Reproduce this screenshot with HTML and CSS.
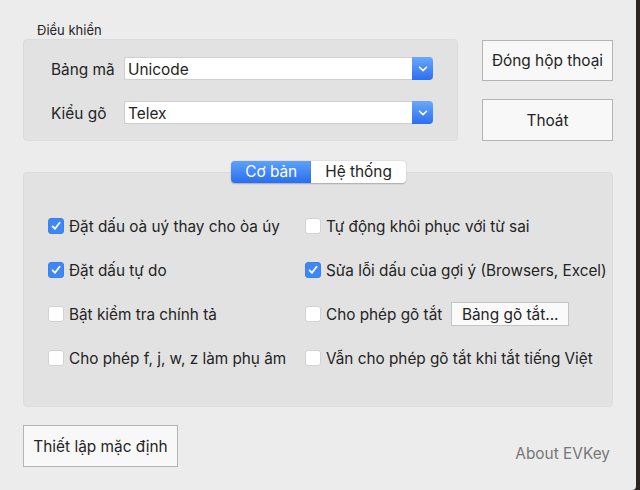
FILE: index.html
```html
<!DOCTYPE html>
<html>
<head>
<meta charset="utf-8">
<link rel="stylesheet" href="styles.css">
</head>
<body>
<div class="window">
  <div class="top">
    <div class="group-wrap">
      <div class="group-label">Điều khiển</div>
      <div class="group">
        <div class="field-row">
          <span class="field-label">Bảng mã</span>
          <div class="select"><span class="select-text">Unicode</span><span class="select-cap"><svg width="10" height="6" viewBox="0 0 10 6"><path d="M1.5 1.2 L5 4.6 L8.5 1.2" fill="none" stroke="#fff" stroke-width="1.6" stroke-linecap="round" stroke-linejoin="round"/></svg></span></div>
        </div>
        <div class="field-row">
          <span class="field-label">Kiểu gõ</span>
          <div class="select"><span class="select-text">Telex</span><span class="select-cap"><svg width="10" height="6" viewBox="0 0 10 6"><path d="M1.5 1.2 L5 4.6 L8.5 1.2" fill="none" stroke="#fff" stroke-width="1.6" stroke-linecap="round" stroke-linejoin="round"/></svg></span></div>
        </div>
      </div>
    </div>
    <div class="side-buttons">
      <div class="btn btn-side">Đóng hộp thoại</div>
      <div class="btn btn-side btn-tall">Thoát</div>
    </div>
  </div>

  <div class="tabs-area">
    <div class="tabs">
      <div class="tab tab-active">Cơ bản</div>
      <div class="tab">Hệ thống</div>
    </div>
    <div class="panel">
      <div class="opt"><span class="cb cb-on"><svg width="12" height="12" viewBox="0 0 12 12"><path d="M2.6 6.3 L5 8.8 L9.6 2.8" fill="none" stroke="#fff" stroke-width="1.8" stroke-linecap="round" stroke-linejoin="round"/></svg></span><span class="lbl">Đặt dấu oà uý thay cho òa úy</span></div>
      <div class="opt"><span class="cb"></span><span class="lbl">Tự động khôi phục với từ sai</span></div>
      <div class="opt"><span class="cb cb-on"><svg width="12" height="12" viewBox="0 0 12 12"><path d="M2.6 6.3 L5 8.8 L9.6 2.8" fill="none" stroke="#fff" stroke-width="1.8" stroke-linecap="round" stroke-linejoin="round"/></svg></span><span class="lbl">Đặt dấu tự do</span></div>
      <div class="opt"><span class="cb cb-on"><svg width="12" height="12" viewBox="0 0 12 12"><path d="M2.6 6.3 L5 8.8 L9.6 2.8" fill="none" stroke="#fff" stroke-width="1.8" stroke-linecap="round" stroke-linejoin="round"/></svg></span><span class="lbl">Sửa lỗi dấu của gợi ý (Browsers, Excel)</span></div>
      <div class="opt"><span class="cb"></span><span class="lbl">Bật kiểm tra chính tả</span></div>
      <div class="opt"><span class="cb"></span><span class="lbl">Cho phép gõ tắt</span><span class="btn btn-small">Bảng gõ tắt...</span></div>
      <div class="opt"><span class="cb"></span><span class="lbl">Cho phép f, j, w, z làm phụ âm</span></div>
      <div class="opt"><span class="cb"></span><span class="lbl">Vẫn cho phép gõ tắt khi tắt tiếng Việt</span></div>
    </div>
  </div>

  <div class="bottom">
    <div class="btn btn-default">Thiết lập mặc định</div>
    <div class="about">About EVKey</div>
  </div>
</div>
</body>
</html>
```

FILE: styles.css
```css
html, body {
  margin: 0;
  padding: 0;
  background: #2a2520;
}
body {
  width: 640px;
  height: 490px;
  overflow: hidden;
  font-family: Inter, "Liberation Sans", Arial, sans-serif;
  color: #242424;
}
.window {
  width: 636px;
  height: 490px;
  background: #ececec;
  box-sizing: border-box;
  padding: 23px 0 0 23px;
  border-bottom-right-radius: 4px;
}
.top {
  display: flex;
  align-items: flex-start;
}
.group-wrap {
  width: 435px;
}
.group-label {
  font-size: 13px;
  line-height: 14px;
  height: 14px;
  margin-left: 14px;
  margin-bottom: 2px;
}
.group {
  height: 102px;
  box-sizing: border-box;
  background: #e2e2e2;
  border: 1px solid #dcdcdc;
  border-radius: 4px;
  padding: 17px 0 0 27px;
  display: flex;
  flex-direction: column;
  gap: 21px;
}
.field-row {
  display: flex;
  align-items: center;
  height: 23px;
}
.field-label {
  width: 73px;
  font-size: 15.4px;
  line-height: 20px;
  padding-top: 2px;
}
.select {
  width: 309px;
  height: 23px;
  display: flex;
  background: #fff;
  box-sizing: border-box;
  border: 1px solid #cfcfcf;
  border-right: none;
  border-radius: 2px 4px 4px 2px;
}
.select-text {
  flex: 1;
  font-size: 15.4px;
  line-height: 23px;
  padding-left: 3px;
}
.select-cap {
  width: 21px;
  margin: -1px 0;
  border-radius: 0 4px 4px 0;
  background: linear-gradient(#69a8fa, #2c6ff0);
  display: flex;
  align-items: center;
  justify-content: center;
}
.side-buttons {
  margin-left: 24px;
  margin-top: 17px;
  display: flex;
  flex-direction: column;
  gap: 18px;
}
.btn {
  background: #f8f8f8;
  border: 1px solid #b4b4b4;
  box-sizing: border-box;
  display: flex;
  align-items: center;
  justify-content: center;
  font-size: 15.4px;
  line-height: 20px;
  padding-top: 1px;
}
.btn-side {
  width: 131px;
  height: 41px;
}
.btn-tall {
  height: 42px;
}
.tabs-area {
  margin-top: 20px;
  width: 590px;
}
.tabs {
  display: flex;
  justify-content: center;
  position: relative;
  z-index: 1;
  margin-bottom: -11px;
  padding-left: 1px;
}
.tab {
  height: 22px;
  box-sizing: border-box;
  font-size: 15.4px;
  line-height: 22px;
  padding: 0 14px;
  background: #fff;
  border-radius: 0 4px 4px 0;
  box-shadow: 0 0.5px 1.5px rgba(0,0,0,0.25);
}
.tab-active {
  background: linear-gradient(#5ca2fa, #2a6ef0);
  color: #fff;
  padding: 0 14px;
  border-radius: 4px 0 0 4px;
}
.panel {
  height: 235px;
  box-sizing: border-box;
  background: #e2e2e2;
  border: 1px solid #dcdcdc;
  border-radius: 4px;
  padding: 41px 0 0 24px;
  display: grid;
  grid-template-columns: 257px auto;
  grid-auto-rows: 24px;
  row-gap: 20px;
}
.opt {
  display: flex;
  align-items: center;
  font-size: 15.3px;
  line-height: 20px;
  white-space: nowrap;
}
.lbl {
  padding-top: 2px;
}
.cb {
  width: 16px;
  height: 16px;
  box-sizing: border-box;
  background: #fff;
  border: 1px solid #d2d2d2;
  border-radius: 3px;
  margin-right: 5px;
  display: flex;
  align-items: center;
  justify-content: center;
  flex-shrink: 0;
}
.cb-on {
  background: #3f87f5;
  border-color: #3a80ee;
}
.btn-small {
  width: 118px;
  height: 24px;
  margin-left: 9px;
  background: #fafafa;
  border-color: #c4c4c4;
}
.bottom {
  display: flex;
  align-items: flex-start;
  justify-content: space-between;
  margin-top: 18px;
  width: 587px;
}
.btn-default {
  width: 155px;
  height: 42px;
}
.about {
  font-size: 15.4px;
  line-height: 20px;
  padding-top: 19px;
  color: #777;
}
```
